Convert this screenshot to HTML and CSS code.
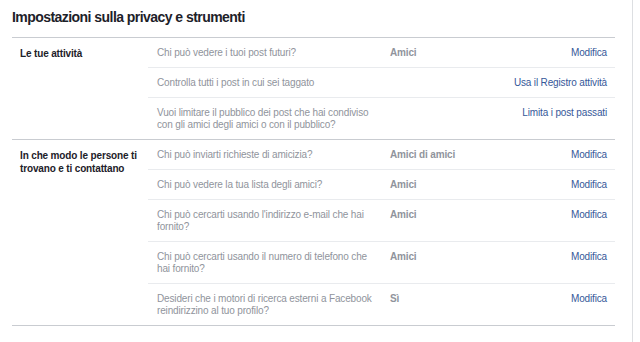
FILE: index.html
```html
<!DOCTYPE html>
<html lang="it">
<head>
<meta charset="UTF-8">
<title>Impostazioni sulla privacy e strumenti</title>
<link rel="stylesheet" href="styles.css">
</head>
<body>
  <div class="card">
    <h1>Impostazioni sulla privacy e strumenti</h1>

    <div class="section">
      <div class="label">Le tue attività</div>
      <div class="rows">
        <div class="row">
          <div class="question">Chi può vedere i tuoi post futuri?</div>
          <div class="value">Amici</div>
          <a class="action" href="#">Modifica</a>
        </div>
        <div class="row">
          <div class="question">Controlla tutti i post in cui sei taggato</div>
          <div class="value"></div>
          <a class="action" href="#">Usa il Registro attività</a>
        </div>
        <div class="row">
          <div class="question">Vuoi limitare il pubblico dei post che hai condiviso con gli amici degli amici o con il pubblico?</div>
          <div class="value"></div>
          <a class="action" href="#">Limita i post passati</a>
        </div>
      </div>
    </div>

    <div class="section">
      <div class="label">In che modo le persone ti trovano e ti contattano</div>
      <div class="rows">
        <div class="row">
          <div class="question">Chi può inviarti richieste di amicizia?</div>
          <div class="value">Amici di amici</div>
          <a class="action" href="#">Modifica</a>
        </div>
        <div class="row">
          <div class="question">Chi può vedere la tua lista degli amici?</div>
          <div class="value">Amici</div>
          <a class="action" href="#">Modifica</a>
        </div>
        <div class="row">
          <div class="question">Chi può cercarti usando l'indirizzo e-mail che hai fornito?</div>
          <div class="value">Amici</div>
          <a class="action" href="#">Modifica</a>
        </div>
        <div class="row">
          <div class="question">Chi può cercarti usando il numero di telefono che hai fornito?</div>
          <div class="value">Amici</div>
          <a class="action" href="#">Modifica</a>
        </div>
        <div class="row">
          <div class="question">Desideri che i motori di ricerca esterni a Facebook reindirizzino al tuo profilo?</div>
          <div class="value">Sì</div>
          <a class="action" href="#">Modifica</a>
        </div>
      </div>
    </div>
  </div>
</body>
</html>
```

FILE: styles.css
```css
body {
  margin: 0;
  background: #fff;
  font-family: "Liberation Sans", Arial, sans-serif;
  font-size: 10px;
  letter-spacing: -0.15px;
  color: #1d2129;
}

.card {
  width: 633px;
  min-height: 100vh;
  padding: 7px 17px 0 12px;
  box-sizing: border-box;
  border-right: 1px solid #dddfe2;
}

h1 {
  font-size: 14px;
  line-height: 20px;
  letter-spacing: -0.55px;
  font-weight: bold;
  color: #1d2129;
  margin: 0 0 10px;
}

.section {
  display: flex;
  border-top: 1px solid #c9ccd1;
}
.section:last-child {
  border-bottom: 1px solid #c9ccd1;
}

.label {
  width: 128px;
  padding: 9px 0 0 8px;
  line-height: 13px;
  font-weight: bold;
  color: #1d2129;
}

.rows {
  flex: 1;
}

.row {
  display: flex;
  align-items: flex-start;
  padding: 9px 8px 8px 9px;
  line-height: 12px;
  border-top: 1px solid #e9ebee;
}
.row:first-child {
  border-top: none;
}

.question {
  width: 218px;
  padding-right: 15px;
  color: #90949c;
}

.value {
  flex: 1;
  font-weight: bold;
  color: #90949c;
}

.action {
  color: #365899;
  text-decoration: none;
  white-space: nowrap;
}
```
